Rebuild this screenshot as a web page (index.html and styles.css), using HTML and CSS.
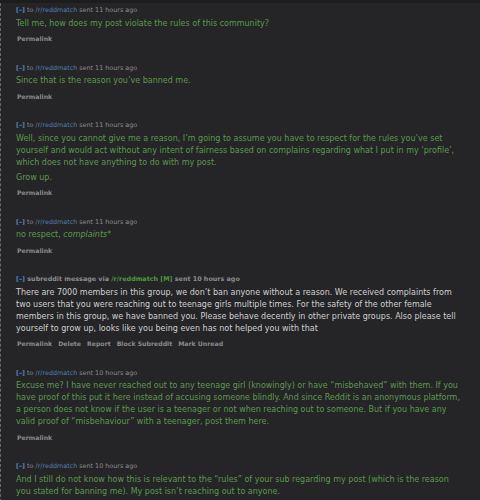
FILE: index.html
```html
<!DOCTYPE html>
<html lang="en">
  <head>
    <meta charset="UTF-8" />
    <title>Messages</title>
    <link rel="stylesheet" href="styles.css">
  </head>
  <body>
    <div class="topbar"></div>
    <div class="thread">
      <div class="message">
        <p class="tagline"><span class="expand">[–]</span> to <a href="#">/r/reddmatch</a> sent 11 hours ago</p>
        <div class="md">
          <p>Tell me, how does my post violate the rules of this community?</p>
        </div>
        <ul class="buttons"><li>Permalink</li></ul>
      </div>

      <div class="message">
        <p class="tagline"><span class="expand">[–]</span> to <a href="#">/r/reddmatch</a> sent 11 hours ago</p>
        <div class="md">
          <p>Since that is the reason you’ve banned me.</p>
        </div>
        <ul class="buttons"><li>Permalink</li></ul>
      </div>

      <div class="message">
        <p class="tagline"><span class="expand">[–]</span> to <a href="#">/r/reddmatch</a> sent 11 hours ago</p>
        <div class="md">
          <p>Well, since you cannot give me a reason, I’m going to assume you have to respect for the rules you’ve set yourself and would act without any intent of fairness based on complains regarding what I put in my ‘profile’, which does not have anything to do with my post.</p>
          <p>Grow up.</p>
        </div>
        <ul class="buttons"><li>Permalink</li></ul>
      </div>

      <div class="message">
        <p class="tagline"><span class="expand">[–]</span> to <a href="#">/r/reddmatch</a> sent 11 hours ago</p>
        <div class="md">
          <p>no respect, <em>complaints*</em></p>
        </div>
        <ul class="buttons"><li>Permalink</li></ul>
      </div>

      <div class="message incoming">
        <p class="tagline"><span class="expand">[–]</span> subreddit message via <a href="#">/r/reddmatch</a> <span class="mod">[M]</span> sent 10 hours ago</p>
        <div class="md">
          <p>There are 7000 members in this group, we don’t ban anyone without a reason. We received complaints from two users that you were reaching out to teenage girls multiple times. For the safety of the other female members in this group, we have banned you. Please behave decently in other private groups. Also please tell yourself to grow up, looks like you being even has not helped you with that</p>
        </div>
        <ul class="buttons">
          <li>Permalink</li>
          <li>Delete</li>
          <li>Report</li>
          <li>Block Subreddit</li>
          <li>Mark Unread</li>
        </ul>
      </div>

      <div class="message">
        <p class="tagline"><span class="expand">[–]</span> to <a href="#">/r/reddmatch</a> sent 10 hours ago</p>
        <div class="md">
          <p>Excuse me? I have never reached out to any teenage girl (knowingly) or have “misbehaved” with them. If you have proof of this put it here instead of accusing someone blindly. And since Reddit is an anonymous platform, a person does not know if the user is a teenager or not when reaching out to someone. But if you have any valid proof of “misbehaviour” with a teenager, post them here.</p>
        </div>
        <ul class="buttons"><li>Permalink</li></ul>
      </div>

      <div class="message">
        <p class="tagline"><span class="expand">[–]</span> to <a href="#">/r/reddmatch</a> sent 10 hours ago</p>
        <div class="md">
          <p>And I still do not know how this is relevant to the “rules” of your sub regarding my post (which is the reason you stated for banning me). My post isn’t reaching out to anyone.</p>
        </div>
        <ul class="buttons"><li>Permalink</li></ul>
      </div>
    </div>
  </body>
</html>
```

FILE: styles.css
```css
body {
  margin: 0;
  background-color: #252527;
  font-family: "DejaVu Sans", Verdana, sans-serif;
}
.topbar {
  height: 3px;
  background-color: #1b1d1f;
}
.thread {
  border-left: 1px dashed #6a6a6a;
  padding: 3px 16px 0 15px;
}
.message {
  padding-bottom: 20.5px;
}
.tagline {
  margin: 0 0 3.5px;
  font-size: 6.4px;
  line-height: 8px;
  color: #8c8c8c;
}
.tagline a {
  color: #4f7fb3;
  text-decoration: none;
}
.expand {
  color: #4f86c6;
  font-weight: bold;
}
.md {
  font-size: 8px;
  line-height: 12px;
  color: #5a9a4c;
}
.md p {
  margin: 0 0 3px;
}
.incoming .tagline {
  font-weight: bold;
}
.incoming .tagline a,
.incoming .mod {
  color: #4e9a3f;
}
.incoming .md {
  color: #cfcfcf;
}
.buttons {
  list-style: none;
  margin: 5.5px 0 0;
  padding: 0 0 0 1px;
  display: flex;
  gap: 6px;
  font-size: 6.2px;
  line-height: 8px;
  font-weight: bold;
  color: #8a8a8a;
}
```
